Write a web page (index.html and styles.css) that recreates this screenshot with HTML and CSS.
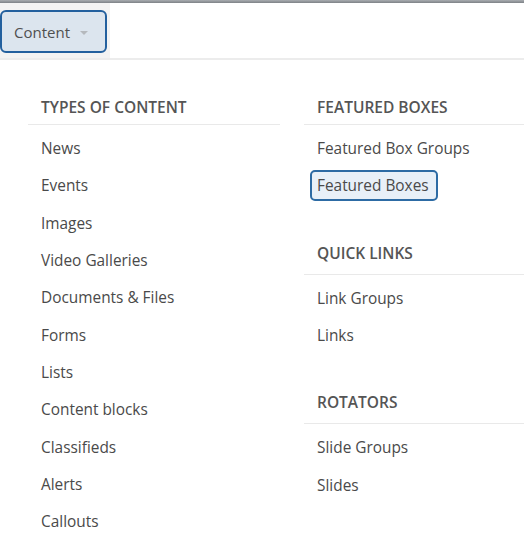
FILE: index.html
```html
<!DOCTYPE html>
<html>
<head>
<meta charset="utf-8">
<link rel="stylesheet" href="styles.css">
</head>
<body>
<div class="topline"></div>
<div class="toolbar">
  <div class="tab">
    <button class="tab-btn">Content <span class="caret"></span></button>
  </div>
</div>
<div class="panel">
  <div class="col">
    <div class="group">
      <h3 class="heading">Types of Content</h3>
      <ul class="items">
        <li><a class="item">News</a></li>
        <li><a class="item">Events</a></li>
        <li><a class="item">Images</a></li>
        <li><a class="item">Video Galleries</a></li>
        <li><a class="item">Documents &amp; Files</a></li>
        <li><a class="item">Forms</a></li>
        <li><a class="item">Lists</a></li>
        <li><a class="item">Content blocks</a></li>
        <li><a class="item">Classifieds</a></li>
        <li><a class="item">Alerts</a></li>
        <li><a class="item">Callouts</a></li>
      </ul>
    </div>
  </div>
  <div class="col col-right">
    <div class="group">
      <h3 class="heading">Featured Boxes</h3>
      <ul class="items">
        <li><a class="item">Featured Box Groups</a></li>
        <li><a class="item focused">Featured Boxes</a></li>
      </ul>
    </div>
    <div class="group">
      <h3 class="heading">Quick Links</h3>
      <ul class="items">
        <li><a class="item">Link Groups</a></li>
        <li><a class="item">Links</a></li>
      </ul>
    </div>
    <div class="group">
      <h3 class="heading">Rotators</h3>
      <ul class="items">
        <li><a class="item">Slide Groups</a></li>
        <li><a class="item">Slides</a></li>
      </ul>
    </div>
  </div>
</div>
</body>
</html>
```

FILE: styles.css
```css
html, body {
  margin: 0;
  padding: 0;
  background: #ffffff;
  font-family: "Open Sans", "Liberation Sans", sans-serif;
  overflow: hidden;
}

.topline {
  height: 3px;
  background: linear-gradient(#a9adb1, #7d8186);
}

.toolbar {
  height: 55px;
  border-bottom: 2px solid #ececec;
  display: flex;
}

.tab {
  width: 110px;
  background: #f3f3f3;
  padding-top: 7px;
  box-sizing: border-box;
}

.tab-btn {
  display: flex;
  align-items: center;
  width: 107px;
  height: 43px;
  box-sizing: border-box;
  margin: 0;
  padding: 0 0 0 12px;
  border: 2px solid #23609e;
  border-radius: 6px;
  background: #dce5ee;
  font-family: "Open Sans", "Liberation Sans", sans-serif;
  font-size: 15px;
  color: #505050;
}

.caret {
  display: inline-block;
  width: 0;
  height: 0;
  margin-left: 10px;
  margin-top: 2px;
  border-left: 4px solid transparent;
  border-right: 4px solid transparent;
  border-top: 4px solid #b5b9bd;
}

.panel {
  display: flex;
  gap: 24px;
  padding: 37px 0 0 28px;
}

.col {
  width: 252px;
  flex: none;
}

.col-right {
  flex: 1;
  width: auto;
}

.group + .group {
  margin-top: 38px;
}

.heading {
  margin: 0;
  padding: 0 0 7px 13px;
  line-height: 20px;
  font-size: 15.5px;
  font-weight: 600;
  text-transform: uppercase;
  color: #555;
  border-bottom: 1px solid #e9e9e9;
}

.group + .group .heading {
  padding-bottom: 11px;
}

.items {
  list-style: none;
  margin: 0;
  padding: 5px 0 0;
}

.items li {
  height: 37.3px;
  display: flex;
  align-items: center;
}

.item {
  display: inline-block;
  margin-left: 6px;
  padding: 4px 7px 4px 5px;
  border: 2px solid transparent;
  border-radius: 5px;
  font-size: 15.4px;
  line-height: 19px;
  color: #4a4a4a;
}

.item.focused {
  background: #e8f0f8;
  border-color: #2d6ba4;
}
```
